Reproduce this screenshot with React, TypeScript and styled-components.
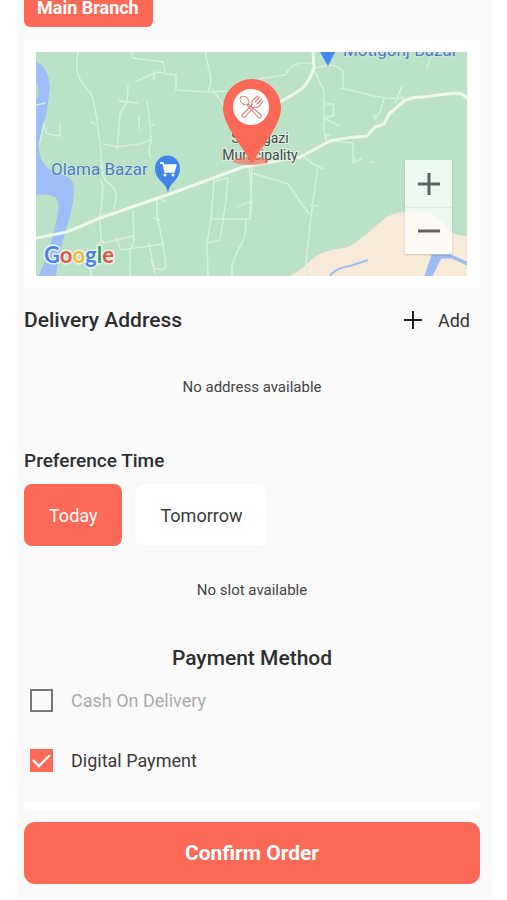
import React, { useState } from "react";
import styled, { createGlobalStyle } from "styled-components";

const coral = "#fd6957";

const GlobalStyle = createGlobalStyle`
  *, *::before, *::after { box-sizing: border-box; }
  body {
    margin: 0;
    background: #fff;
    color: #2e2e2e;
    font-family: Roboto, "Liberation Sans", sans-serif;
  }
  button { font-family: inherit; cursor: pointer; }
`;

const Page = styled.main`
  margin: 0 15px 0 17px;
  padding: 0 12px 14px 7px;
  background: #fafafa;
`;

const BranchButton = styled.button`
  display: block;
  padding: 0 14px 11px 13px;
  border: 0;
  border-radius: 0 0 6px 6px;
  background: ${coral};
  color: #fff;
  font-size: 18px;
  font-weight: 700;
  line-height: 16px;
`;

const MapCard = styled.section`
  position: relative;
  margin-top: 13px;
  padding: 12px 13px 12px 12px;
  border-radius: 6px;
  background: #fff;
`;

const MapDrawing = styled.svg`
  display: block;
  width: 100%;
  height: auto;
`;

const ZoomControl = styled.div`
  position: absolute;
  right: 28px;
  bottom: 34px;
  width: 47px;
  background: rgba(255, 255, 255, 0.74);
  box-shadow: 0 1px 2px rgba(0, 0, 0, 0.18);
`;

const ZoomButton = styled.button`
  display: grid;
  place-items: center;
  width: 100%;
  height: 47px;
  padding: 0;
  border: 0;
  background: transparent;

  & + & {
    border-top: 1px solid rgba(0, 0, 0, 0.06);
  }
`;

const SectionHeader = styled.div`
  display: flex;
  align-items: center;
  justify-content: space-between;
  margin-top: 16px;
`;

const Heading = styled.h2<{ $size: number; $center?: boolean }>`
  margin: 0;
  font-size: ${({ $size }) => $size}px;
  font-weight: 500;
  line-height: 24px;
  text-align: ${({ $center }) => ($center ? "center" : "left")};
`;

const AddButton = styled.button`
  display: flex;
  align-items: center;
  gap: 16px;
  height: 32px;
  padding: 0 10px 0 0;
  border: 0;
  background: transparent;
  color: #333;
  font-size: 18px;
`;

const EmptyNote = styled.p<{ $top: number }>`
  margin: ${({ $top }) => $top}px 0 0;
  color: #444;
  font-size: 15px;
  line-height: 24px;
  text-align: center;
`;

const TimeSection = styled.section`
  margin-top: 50px;
`;

const DayList = styled.div`
  display: flex;
  gap: 13px;
  margin-top: 11px;
`;

const DayButton = styled.button<{ $active: boolean }>`
  height: 62px;
  padding: 0 25px;
  border: 0;
  border-radius: 8px;
  background: ${({ $active }) => ($active ? coral : "#fff")};
  box-shadow: ${({ $active }) => ($active ? "none" : "0 0 2px rgba(0, 0, 0, 0.06)")};
  color: ${({ $active }) => ($active ? "#fff" : "#3a3a3a")};
  font-size: 18px;
`;

const PaymentSection = styled.section`
  margin-top: 44px;
`;

const PaymentList = styled.div`
  display: grid;
  gap: 28px;
  margin-top: 14px;
`;

const PaymentOption = styled.label<{ $muted: boolean }>`
  display: flex;
  align-items: center;
  gap: 18px;
  height: 32px;
  padding-left: 6px;
  color: ${({ $muted }) => ($muted ? "#aaa" : "#3a3a3a")};
  font-size: 18px;
`;

const CheckSlot = styled.span`
  display: grid;
  width: 23px;
  height: 23px;

  & > * {
    grid-area: 1 / 1;
  }
`;

const CheckInput = styled.input`
  appearance: none;
  width: 23px;
  height: 23px;
  margin: 0;
  border: 2px solid #777;

  &:checked {
    border-color: ${coral};
    background: ${coral};
  }
`;

const CheckMark = styled.svg`
  display: none;
  pointer-events: none;

  ${CheckInput}:checked + & {
    display: block;
  }
`;

const Strip = styled.div`
  height: 8px;
  margin-top: 26px;
  border-radius: 0 0 6px 6px;
  background: #fff;
`;

const ConfirmButton = styled.button`
  display: block;
  width: 100%;
  height: 62px;
  margin-top: 12px;
  border: 0;
  border-radius: 11px;
  background: ${coral};
  color: #fff;
  font-size: 21px;
  font-weight: 700;
`;

function BranchMap() {
  return (
    <MapDrawing viewBox="36 52 431 224" role="img" aria-label="Map around Sonagazi Municipality">
      <rect x="36" y="52" width="431" height="224" fill="#bbe2c6" />
      <path
        d="M290 276H467V236Q452 235 447 228Q437 212 421 212Q400 210 387 217C373 227 360 241 350 246C337 251 325 248 311 260Q302 270 290 276Z"
        fill="#f7ead8"
      />
      <path
        d="M36 62Q48 66 50 87Q48 105 44 126Q41 137 38 144Q39 162 50 170L66 176Q75 180 74 192Q73 209 66 229Q60 250 56 276H39Q50 250 57 218Q61 203 55 197Q47 193 36 195V100Q41 93 36 82Z"
        fill="#9ebef8"
      />
      <path d="M330 276Q335 268 350 266L368 260" fill="none" stroke="#9bbcf1" strokeWidth="2" />
      <path d="M425 276L432 255H451L467 262V265L452 258H441L432 276Z" fill="#9bbcf1" stroke="#9bbcf1" strokeWidth="1" />
      <g fill="none" stroke="#d6f0db" strokeWidth="1.6" strokeLinejoin="round" strokeLinecap="round">
        <path d="M78 52Q75 67 78 75T91 93Q97 112 98 129L101 150Q101 172 105 180Q119 190 116 199L114 209" />
        <path d="M91 122L96 124M137 81L157 72L176 75V90L208 92L227 91M131 52L133 58L163 62L165 71M154 74V80" />
        <path d="M206 52Q206 62 209 67L211 82L208 92M213 90L223 104L227 113" />
        <path d="M128 86L127 102L120 114L118 140L117 149M119 101L137 103M104 144L117 147L139 144L151 140L150 124L147 102M139 116V129M150 125H154M151 141Q147 153 151 158" />
        <path d="M36 105L45 103M44 126L47 134L60 136L60 125M44 123L40 142" />
        <path d="M101 180L103 188L100 219L101 239L104 243L133 236M133 211L134 240L130 252V275M101 242L91 263V276M116 238L121 250L164 244M157 198V217L163 244L166 266L163 270L154 268L149 244M151 259L155 273M154 218L160 220M160 198L166 202" />
        <path d="M227 178L214 181L211 219L207 243L208 276M228 178L225 208L220 240L207 243M212 219H250L252 202L249 165M237 207L250 202M246 220Q247 238 238 250L232 264V276" />
        <path d="M252 173L272 179L288 184L299 200L309 214M252 165L251 198L250 217M308 276L306 263L311 217L318 165M311 205L318 206M304 157L313 164L323 169" />
        <path d="M258 79L285 75Q291 65 300 63H313M313 68L324 91L324 130L326 140M316 68L328 65Q340 66 343 72V87M341 88L362 93Q374 97 386 98L405 99L401 96M402 86L395 103M384 99L380 112L375 119L374 115M324 104H333L334 115L325 118M325 119L340 126M324 135H330M333 141L353 143V162L361 159M354 163V158M431 57L427 68M371 162H374" />
      </g>
      <g fill="none" stroke="#ecf8e9" strokeWidth="3" strokeLinejoin="round" strokeLinecap="round">
        <path d="M36 238L67 232L100 218L167 195L243 167L300 157L330 141Q348 137 367 136L375 127L384 124L389 114L403 102Q410 97 422 97L455 93Q463 93 468 99" />
        <path d="M313 52L314 68Q310 80 303 88Q292 96 278 103" />
      </g>

      <g fill="#4b78c2" stroke="#d9efe4" strokeWidth="1" paintOrder="stroke" fontSize="17">
        <text x="51" y="175">Olama Bazar</text>
        <text x="343" y="56">Motigonj Bazar</text>
      </g>
      <path d="M320 52H335L328 66Z" fill="#4285f4" />

      <path d="M168 193C166 181 155 181 155 168A12.5 12.5 0 0 1 180 168C180 181 170 181 168 193Z" fill="#4285e9" />
      <path d="M160 163H163L165 172H174L176 165H164" fill="#fff" stroke="#fff" strokeWidth="1.4" strokeLinejoin="round" />
      <circle cx="165" cy="175" r="1.5" fill="#fff" />
      <circle cx="173" cy="175" r="1.5" fill="#fff" />

      <g fill="#444b49" stroke="#e0f1e4" strokeWidth="2" paintOrder="stroke" fontSize="14" textAnchor="middle">
        <text x="260" y="143">Sonagazi</text>
        <text x="260" y="160">Municipality</text>
      </g>

      <ellipse cx="251" cy="161" rx="18" ry="4" fill={coral} opacity="0.65" />
      <path d="M252 164C244 148 223 126 223 108A29 29 0 0 1 281 108C281 126 260 148 252 164Z" fill={coral} />
      <circle cx="251" cy="107" r="18" fill="#fff" />
      <g fill="none" stroke="#e37c77" strokeWidth="1.1" strokeLinecap="round" strokeLinejoin="round">
        <ellipse cx="244.500" cy="100.500" rx="5" ry="3.500" transform="rotate(42 244.500 100.500)" />
        <path d="M248 104L261 115Q262 118 259 118L247 105" />
        <path d="M242 115L252 105Q251 101 254 99L258 96M242 115Q242 118 245 117L254 107Q259 108 261 104L263 101M255 102L260 97M257 104L262 99" />
      </g>

      <text
        x="44"
        y="263"
        fontFamily="Lato, sans-serif"
        fontSize="22"
        fontWeight="700"
        stroke="#e8f5eb"
        strokeWidth="3"
        paintOrder="stroke"
        strokeLinejoin="round"
      >
        <tspan fill="#4b82e8">G</tspan>
        <tspan fill="#df5548">o</tspan>
        <tspan fill="#f0bd32">o</tspan>
        <tspan fill="#4b82e8">g</tspan>
        <tspan fill="#3d9b59">l</tspan>
        <tspan fill="#df5548">e</tspan>
      </text>
    </MapDrawing>
  );
}

const days = ["Today", "Tomorrow"];

export default function App() {
  const [day, setDay] = useState("Today");
  const [cash, setCash] = useState(false);
  const [digital, setDigital] = useState(true);

  const options = [
    { label: "Cash On Delivery", checked: cash, set: setCash },
    { label: "Digital Payment", checked: digital, set: setDigital },
  ];

  return (
    <>
      <GlobalStyle />
      <Page>
        <BranchButton type="button">Main Branch</BranchButton>

        <MapCard>
          <BranchMap />
          <ZoomControl>
            <ZoomButton type="button" aria-label="Zoom in">
              <svg width="22" height="22" viewBox="0 0 22 22">
                <path d="M0 11H22M11 0V22" stroke="#5e625f" strokeWidth="3" />
              </svg>
            </ZoomButton>
            <ZoomButton type="button" aria-label="Zoom out">
              <svg width="22" height="22" viewBox="0 0 22 22">
                <path d="M0 11H22" stroke="#66655f" strokeWidth="3" />
              </svg>
            </ZoomButton>
          </ZoomControl>
        </MapCard>

        <section>
          <SectionHeader>
            <Heading $size={21}>Delivery Address</Heading>
            <AddButton type="button">
              <svg width="18" height="18" viewBox="0 0 18 18" aria-hidden="true">
                <path d="M0 9H18M9 0V18" stroke="#222" strokeWidth="2" />
              </svg>
              Add
            </AddButton>
          </SectionHeader>
          <EmptyNote $top={39}>No address available</EmptyNote>
        </section>

        <TimeSection>
          <Heading $size={19}>Preference Time</Heading>
          <DayList>
            {days.map((name) => (
              <DayButton
                key={name}
                type="button"
                $active={day === name}
                aria-pressed={day === name}
                onClick={() => setDay(name)}
              >
                {name}
              </DayButton>
            ))}
          </DayList>
          <EmptyNote $top={32}>No slot available</EmptyNote>
        </TimeSection>

        <PaymentSection>
          <Heading $size={21} $center>Payment Method</Heading>
          <PaymentList>
            {options.map(({ label, checked, set }) => (
              <PaymentOption key={label} $muted={!checked}>
                <CheckSlot>
                  <CheckInput type="checkbox" checked={checked} onChange={(e) => set(e.target.checked)} />
                  <CheckMark width="23" height="23" viewBox="0 0 23 23" aria-hidden="true">
                    <path d="M3 11L9 17L20 6" fill="none" stroke="#fff" strokeWidth="2.4" />
                  </CheckMark>
                </CheckSlot>
                {label}
              </PaymentOption>
            ))}
          </PaymentList>
        </PaymentSection>

        <Strip />
        <ConfirmButton type="button">Confirm Order</ConfirmButton>
      </Page>
    </>
  );
}
